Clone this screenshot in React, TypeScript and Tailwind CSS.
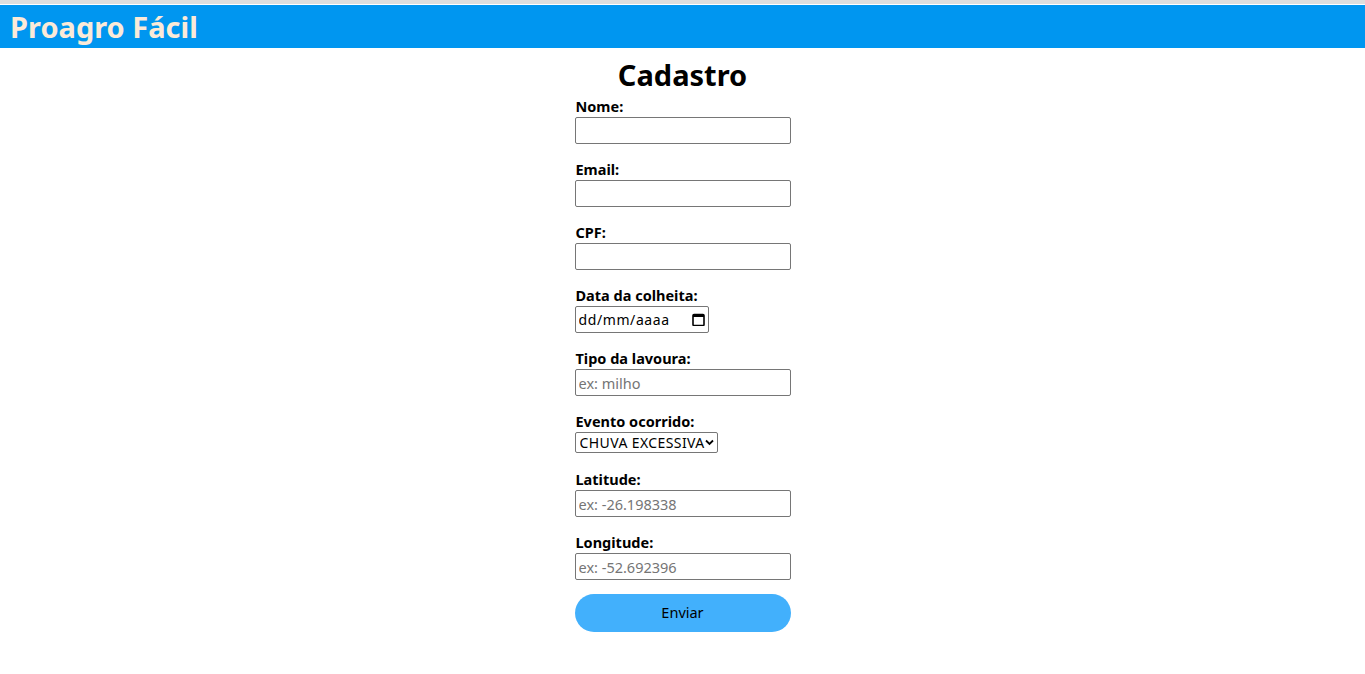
import React from 'react';

const fields = [
  { label: 'Nome:', type: 'text', placeholder: '' },
  { label: 'Email:', type: 'email', placeholder: '' },
  { label: 'CPF:', type: 'text', placeholder: '' },
];

const labelCls = 'text-[14.5px] font-bold leading-[18px] pb-[2px] pl-px';
const inputCls =
  'block h-[27px] w-[216px] border border-[#767676] rounded-[2px] px-[3px] text-[14.5px] placeholder:text-[#757575] outline-none';

export default function App() {
  return (
    <div className="min-h-screen bg-white text-black" style={{ fontFamily: '"Noto Sans", sans-serif' }}>
      <div className="h-[4px] bg-[#dedede]" />
      <header className="mt-px h-[43px] bg-[#0096f0] flex items-center px-[10px]">
        <h1 className="text-[29px] font-bold text-[#fbead8] leading-none">Proagro Fácil</h1>
      </header>

      <main className="flex flex-col items-center">
        <h2 className="mt-[9px] mb-[4px] text-[29px] font-bold leading-[36px]">Cadastro</h2>
        <form className="w-[216px] flex flex-col" onSubmit={(e) => e.preventDefault()}>
          {fields.map((f) => (
            <div key={f.label} className="flex flex-col mb-[16px]">
              <label className={labelCls}>{f.label}</label>
              <input type={f.type} placeholder={f.placeholder} className={inputCls} />
            </div>
          ))}

          <div className="flex flex-col mb-[16px]">
            <label className={labelCls}>Data da colheita:</label>
            <div className="relative w-[134px]">
              <input
                type="text"
                placeholder="dd/mm/aaaa"
                className="block h-[27px] w-[134px] border border-[#767676] rounded-[2px] pl-[3px] pr-[24px] text-[14px] tracking-[0.6px] placeholder:text-black outline-none"
              />
              <svg
                className="absolute right-[4px] top-[7px] w-[13px] h-[13px] pointer-events-none"
                viewBox="0 0 13 13"
              >
                <rect x="1" y="1.5" width="11" height="11" rx="1" fill="none" stroke="#000" strokeWidth="1.6" />
                <rect x="1" y="1" width="11" height="3" fill="#000" />
              </svg>
            </div>
          </div>

          <div className="flex flex-col mb-[16px]">
            <label className={labelCls}>Tipo da lavoura:</label>
            <input type="text" placeholder="ex: milho" className={inputCls} />
          </div>

          <div className="flex flex-col mb-[17px]">
            <label className={labelCls}>Evento ocorrido:</label>
            <div className="relative w-[143px]">
              <select
                defaultValue="CHUVA EXCESSIVA"
                className="block h-[21px] w-[143px] appearance-none border border-[#767676] rounded-[2px] bg-white pl-[4px] pr-[12px] text-[14px] tracking-[0.4px] leading-[19px] outline-none"
              >
                <option>CHUVA EXCESSIVA</option>
                <option>GEADA</option>
                <option>GRANIZO</option>
                <option>SECA</option>
                <option>VENDAVAL</option>
                <option>RAIO</option>
              </select>
              <svg
                className="absolute right-[4px] top-[7px] w-[9px] h-[7px] pointer-events-none"
                viewBox="0 0 9 7"
              >
                <path d="M1 1.5 L4.5 5 L8 1.5" fill="none" stroke="#000" strokeWidth="1.8" />
              </svg>
            </div>
          </div>

          <div className="flex flex-col mb-[16px]">
            <label className={labelCls}>Latitude:</label>
            <input type="text" placeholder="ex: -26.198338" className={inputCls} />
          </div>

          <div className="flex flex-col mb-[14px]">
            <label className={labelCls}>Longitude:</label>
            <input type="text" placeholder="ex: -52.692396" className={inputCls} />
          </div>

          <button
            type="submit"
            className="h-[38px] w-[216px] rounded-full bg-[#42b0fc] text-[14.5px] text-black"
          >
            Enviar
          </button>
        </form>
      </main>
    </div>
  );
}
